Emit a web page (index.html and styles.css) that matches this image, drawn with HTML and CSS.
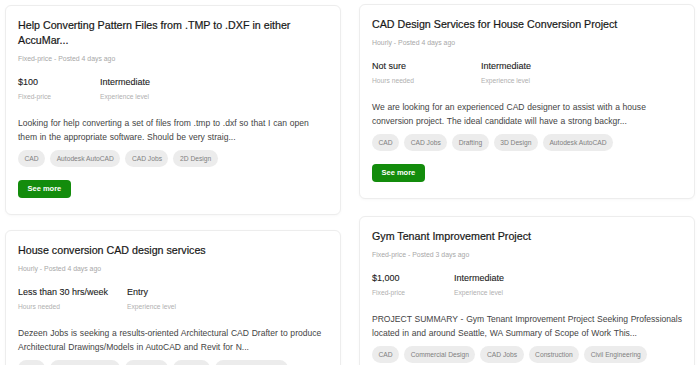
FILE: index.html
```html
<!DOCTYPE html>
<html lang="en">
<head>
<meta charset="utf-8">
<title>Jobs</title>
<link rel="stylesheet" href="styles.css">
</head>
<body>
<div class="board">
  <div class="col col-left">
    <article class="card">
      <h2 class="title">Help Converting Pattern Files from .TMP to .DXF in either AccuMar...</h2>
      <p class="meta">Fixed-price - Posted 4 days ago</p>
      <div class="stats fixed">
        <div class="stat"><div class="val">$100</div><div class="lbl">Fixed-price</div></div>
        <div class="stat"><div class="val">Intermediate</div><div class="lbl">Experience level</div></div>
      </div>
      <p class="desc">Looking for help converting a set of files from .tmp to .dxf so that I can open<br>them in the appropriate software. Should be very straig...</p>
      <div class="tags">
        <span class="tag">CAD</span><span class="tag">Autodesk AutoCAD</span><span class="tag">CAD Jobs</span><span class="tag">2D Design</span>
      </div>
      <button class="btn">See more</button>
    </article>
    <article class="card">
      <h2 class="title">House conversion CAD design services</h2>
      <p class="meta">Hourly - Posted 4 days ago</p>
      <div class="stats hourly">
        <div class="stat"><div class="val">Less than 30 hrs/week</div><div class="lbl">Hours needed</div></div>
        <div class="stat"><div class="val">Entry</div><div class="lbl">Experience level</div></div>
      </div>
      <p class="desc">Dezeen Jobs is seeking a results-oriented Architectural CAD Drafter to produce<br>Architectural Drawings/Models in AutoCAD and Revit for N...</p>
      <div class="tags">
        <span class="tag">CAD</span><span class="tag">Autodesk AutoCAD</span><span class="tag">CAD Jobs</span><span class="tag">Drafting</span><span class="tag">Architectural Design</span>
      </div>
      <button class="btn">See more</button>
    </article>
  </div>
  <div class="col col-right">
    <article class="card">
      <h2 class="title">CAD Design Services for House Conversion Project</h2>
      <p class="meta">Hourly - Posted 4 days ago</p>
      <div class="stats hourly">
        <div class="stat"><div class="val">Not sure</div><div class="lbl">Hours needed</div></div>
        <div class="stat"><div class="val">Intermediate</div><div class="lbl">Experience level</div></div>
      </div>
      <p class="desc">We are looking for an experienced CAD designer to assist with a house<br>conversion project. The ideal candidate will have a strong backgr...</p>
      <div class="tags">
        <span class="tag">CAD</span><span class="tag">CAD Jobs</span><span class="tag">Drafting</span><span class="tag">3D Design</span><span class="tag">Autodesk AutoCAD</span>
      </div>
      <button class="btn">See more</button>
    </article>
    <article class="card">
      <h2 class="title">Gym Tenant Improvement Project</h2>
      <p class="meta">Fixed-price - Posted 3 days ago</p>
      <div class="stats fixed">
        <div class="stat"><div class="val">$1,000</div><div class="lbl">Fixed-price</div></div>
        <div class="stat"><div class="val">Intermediate</div><div class="lbl">Experience level</div></div>
      </div>
      <p class="desc">PROJECT SUMMARY - Gym Tenant Improvement Project Seeking Professionals<br>located in and around Seattle, WA Summary of Scope of Work This...</p>
      <div class="tags">
        <span class="tag">CAD</span><span class="tag">Commercial Design</span><span class="tag">CAD Jobs</span><span class="tag">Construction</span><span class="tag">Civil Engineering</span>
      </div>
      <button class="btn">See more</button>
    </article>
  </div>
</div>
</body>
</html>
```

FILE: styles.css
```css
* { box-sizing: border-box; }
html, body { margin: 0; padding: 0; background: #ffffff; }
body {
  font-family: "Liberation Sans", Arial, sans-serif;
  color: #222;
  overflow: hidden;
  height: 365px;
}
.board {
  display: flex;
  align-items: flex-start;
  gap: 18px;
  padding: 5px 0 0 5px;
}
.col {
  width: 336px;
  display: flex;
  flex-direction: column;
}
.col-left { gap: 15px; }
.col-right { gap: 17px; margin-top: -1px; }
.card {
  border: 1px solid #ededed;
  border-radius: 6px;
  box-shadow: 0 1px 3px rgba(0,0,0,0.03);
  padding: 12px 10px 16px 12px;
  background: #fff;
}
.title {
  margin: 0;
  font-size: 10.7px;
  line-height: 15px;
  font-weight: 400;
  color: #181818;
  -webkit-text-stroke: 0.2px #181818;
}
.meta {
  margin: 6px 0 0;
  font-size: 6.9px;
  line-height: 10px;
  color: #a8a8a8;
}
.stats {
  display: grid;
  margin-top: 12px;
  column-gap: 18px;
}
.stats.fixed { grid-template-columns: 64px auto; }
.stats.hourly { grid-template-columns: 91px auto; }
.val {
  font-size: 9px;
  line-height: 13px;
  color: #222;
  white-space: nowrap;
  -webkit-text-stroke: 0.1px #222;
}
.lbl {
  margin-top: 3px;
  font-size: 6.7px;
  line-height: 10px;
  color: #b0b0b0;
  white-space: nowrap;
}
.desc {
  margin: 14px 0 0;
  font-size: 8.55px;
  line-height: 14px;
  word-spacing: 0.35px;
  color: #444;
  white-space: nowrap;
}
.tags {
  display: flex;
  flex-wrap: wrap;
  gap: 5px;
  margin-top: 6px;
}
.tag {
  height: 17px;
  line-height: 17px;
  padding: 0 6.5px;
  border-radius: 9px;
  background: #ececec;
  color: #808080;
  font-size: 6.7px;
  white-space: nowrap;
}
.btn {
  display: block;
  margin-top: 13px;
  height: 18px;
  padding: 0 9.5px;
  border: none;
  border-radius: 4px;
  background: #138c0c;
  color: #fff;
  font-family: "Liberation Sans", Arial, sans-serif;
  font-weight: 700;
  font-size: 7.5px;
  line-height: 18px;
}
```
